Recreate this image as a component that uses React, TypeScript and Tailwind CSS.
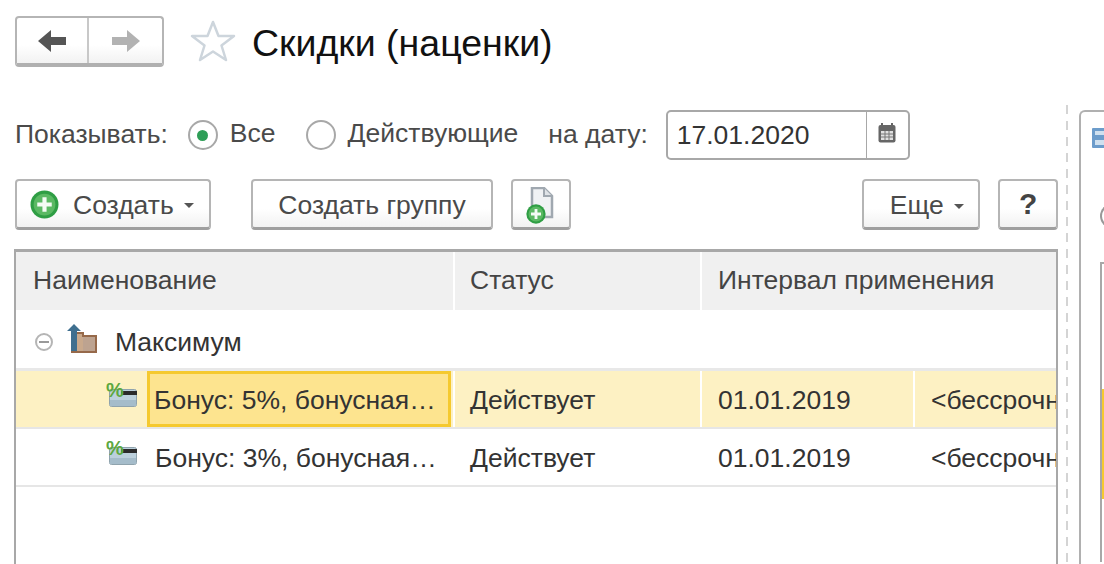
import React from "react";

const btn = "flex items-center justify-center rounded-[4px] border-2 border-[#b5b5b5] border-b-[3px] border-b-[#9f9f9f] bg-gradient-to-b from-white from-60% to-[#f2f2f2] text-[#4a4a4a]";

function Caret() {
  return <span className="ml-[10px] mt-[3px] h-0 w-0 border-x-[5px] border-t-[5px] border-x-transparent border-t-[#555555]" />;
}

function PlusBadge({ size }: { size: number }) {
  return (
    <svg width={size} height={size} viewBox="0 0 28 28">
      <circle cx="14" cy="14" r="13.5" fill="#2f9e44" />
      <circle cx="14" cy="14" r="10.5" fill="#5bb963" />
      <path d="M12 7h4v5h5v4h-5v5h-4v-5h-5v-4h5z" fill="#f4fbf4" />
    </svg>
  );
}

function Radio({ checked }: { checked?: boolean }) {
  return (
    <span className="flex h-[30px] w-[30px] items-center justify-center rounded-full border-2 border-[#a8a8a8] bg-white">
      {checked && <span className="h-[11px] w-[11px] rounded-full bg-[#2e9e57]" />}
    </span>
  );
}

function DiscountIcon() {
  return (
    <svg width="31" height="30" viewBox="0 -5 31 30" className="mt-[-15px]">
      <rect x="3.5" y="7.5" width="27" height="17" rx="2" fill="#bcd0dc" stroke="#8fa3ad" />
      <rect x="15" y="9" width="16" height="4" fill="#2b2b2b" />
      <rect x="4" y="18" width="26" height="6" fill="#a5bcca" />
      <text x="0" y="15" fontSize="20" fontWeight="700" fill="#5da83f" fontFamily="Liberation Sans, sans-serif">%</text>
    </svg>
  );
}

function Row({ selected, name }: { selected?: boolean; name: string }) {
  const cell = selected ? "bg-[#fdf1c3]" : "";
  const divider = selected ? "border-l-2 border-white" : "border-l-2 border-transparent";
  return (
    <div className="grid h-[58px] grid-cols-[437px_247px_213px_1fr] border-b-2 border-[#e6e6e6] text-[26.5px] leading-none text-[#333333]">
      <div className={`flex items-center ${cell}`}>
        <div className="flex w-[131px] shrink-0 justify-end pr-[10px]"><DiscountIcon /></div>
        <div className={`flex h-full min-w-0 flex-1 items-center ${selected ? "mr-[2px] border-[3px] border-[#f5c92f] bg-[#fde48f] pl-[4px]" : "pl-[8px]"}`}>
          <span className="block whitespace-nowrap pt-[2px]">{name}</span>
        </div>
      </div>
      <div className={`flex items-center pl-[15px] pt-[2px] ${cell} ${divider}`}>Действует</div>
      <div className={`flex items-center pl-[16px] pt-[2px] ${cell} ${divider}`}>01.01.2019</div>
      <div className={`flex items-center overflow-hidden whitespace-nowrap pl-[16px] pt-[2px] ${cell} ${divider}`}>&lt;бессрочно&gt;</div>
    </div>
  );
}

export default function App() {
  return (
    <div className="flex h-[564px] w-[1104px] overflow-hidden bg-white font-['Liberation_Sans',Arial,sans-serif]">
      <div className="flex w-[1058px] shrink-0 flex-col pl-[15px]">
        <div className="mt-[16px] flex h-[51px] items-center">
          <div className="flex h-[51px] w-[149px] rounded-[4px] border-2 border-[#b5b5b5] border-b-[4px] border-b-[#b0b0b0] bg-gradient-to-b from-white from-60% to-[#f2f2f2]">
            <div className="flex w-[72px] items-center justify-center border-r-2 border-[#c8c8c8]">
              <svg width="28" height="22" viewBox="0 0 28 22"><path d="M0 11 L13 0 V7 H28 V15 H13 V22 Z" fill="#555555" /></svg>
            </div>
            <div className="flex flex-1 items-center justify-center">
              <svg width="28" height="22" viewBox="0 0 28 22"><path d="M28 11 L15 0 V7 H0 V15 H15 V22 Z" fill="#b2b2b2" /></svg>
            </div>
          </div>
          <svg width="48" height="44" viewBox="0 0 48 44" className="ml-[25px] mt-[-2px]">
            <path d="M24 3 L29.5 17 L45 17 L32.5 26.5 L37 41 L24 32.5 L11 41 L15.5 26.5 L3 17 L18.5 17 Z" fill="white" stroke="#cdd5dc" strokeWidth="2.5" strokeLinejoin="round" />
          </svg>
          <div className="ml-[15px] pt-[5px] text-[37.5px] leading-none whitespace-nowrap text-[#111111]">Скидки (наценки)</div>
        </div>

        <div className="mt-[43px] flex h-[50px] items-center text-[26.5px] leading-none text-[#4a4a4a]">
          <span className="mb-[1px]">Показывать:</span>
          <span className="ml-[20px]"><Radio checked /></span>
          <span className="ml-[12px] mb-[3px]">Все</span>
          <span className="ml-[30px]"><Radio /></span>
          <span className="ml-[12px] mb-[3px]">Действующие</span>
          <span className="ml-[30px] mb-[1px]">на дату:</span>
          <div className="ml-[18px] flex h-[50px] w-[244px] rounded-[5px] border-2 border-[#a8a8a8] text-[#333333]">
            <div className="flex w-[199px] items-center border-r border-[#a8a8a8] pl-[9px]">17.01.2020</div>
            <div className="flex flex-1 items-center justify-center pb-[4px]">
              <svg width="18" height="20" viewBox="0 0 18 20">
                <rect x="0.5" y="2" width="17" height="17.5" rx="2" fill="#666666" />
                <rect x="3" y="0" width="2" height="4" fill="#666666" />
                <rect x="13" y="0" width="2" height="4" fill="#666666" />
                <rect x="3" y="8" width="12" height="9" fill="#e0e0e0" />
                <path d="M7 8v9M11 8v9M3 11h12M3 14h12" stroke="#777777" strokeWidth="1" />
              </svg>
            </div>
          </div>
        </div>

        <div className="mt-[19px] flex h-[51px] items-stretch text-[26.5px] leading-none">
          <div className={`${btn} w-[196px] justify-start pl-[13px]`}>
            <PlusBadge size={29} />
            <span className="ml-[14px] pt-[2px]">Создать</span>
            <Caret />
          </div>
          <div className={`${btn} ml-[40px] w-[243px] pt-[2px]`}>Создать группу</div>
          <div className={`${btn} ml-[18px] w-[60px]`}>
            <div className="relative h-[34px] w-[26px]">
              <svg width="26" height="32" viewBox="0 0 26 32" className="ml-[1px]">
                <path d="M3 1 H15 L23 9 V30 H3 Z" fill="#f0f2f4" stroke="#a0a8b0" strokeWidth="2.5" />
                <path d="M15 1 V9 H23" fill="#dfe3e7" stroke="#a0a8b0" strokeWidth="2" />
              </svg>
              <span className="absolute bottom-[-3px] left-[-2px]"><PlusBadge size={20} /></span>
            </div>
          </div>
          <div className={`${btn} ml-[291px] w-[118px] pl-[11px] pt-[2px]`}>Еще<Caret /></div>
          <div className={`${btn} ml-[18px] w-[60px] text-[30px] font-bold text-[#444444]`}>?</div>
        </div>

        <div className="ml-[-1px] mt-[19px] flex-1 border-x-2 border-t-[3px] border-[#a8a8a8]">
          <div className="grid h-[58px] grid-cols-[437px_247px_1fr] bg-[#f0f0f0] pb-[1px] text-[26.5px] leading-none text-[#444444]">
            <div className="flex items-center pl-[17px]">Наименование</div>
            <div className="mb-[-1px] flex items-center border-l-2 border-white pb-[1px] pl-[15px]">Статус</div>
            <div className="mb-[-1px] flex items-center border-l-2 border-white pb-[1px] pl-[16px]">Интервал применения</div>
          </div>
          <div className="flex h-[61px] items-center border-b-[3px] border-[#e8e8e8] pt-[6px] text-[26.5px] leading-none text-[#333333]">
            <span className="ml-[19px] flex h-[18px] w-[18px] items-center justify-center rounded-full border-2 border-[#b5b5b5]">
              <span className="h-[2px] w-[10px] bg-[#999999]" />
            </span>
            <svg width="32" height="30" viewBox="0 0 32 30" className="ml-[13px] mb-[6px]">
              <path d="M6 9 H17 V12 H30 V28 H6 Z" fill="#c9a98c" stroke="#96694a" strokeWidth="2" />
              <rect x="17" y="13" width="12" height="14" fill="#bda390" />
              <path d="M8 0 L15 7 H11 V27 H5 V7 H1 Z" fill="#3f6f8f" />
            </svg>
            <span className="ml-[17px]">Максимум</span>
          </div>
          <Row selected name="Бонус: 5%, бонусная…" />
          <Row name="Бонус: 3%, бонусная…" />
        </div>
      </div>

      <div className="ml-[8px] mt-[105px] w-[2px] shrink-0 bg-[repeating-linear-gradient(to_bottom,#d4d4d4_0px,#d4d4d4_9px,transparent_9px,transparent_16px)]" />

      <div className="ml-[11px] mt-[110px] flex-1 rounded-tl-[6px] border-l-2 border-t-2 border-[#b0b0b0] pl-[11px] pt-[16px]">
        <svg width="14" height="20" viewBox="0 0 14 20" className="block">
          <rect width="20" height="20" rx="1" fill="#6c9ccb" />
          <rect x="3" y="3" width="11" height="4" fill="#cfe0ef" />
          <rect x="3" y="12" width="11" height="5" fill="#cfe0ef" />
        </svg>
        <div className="ml-[8px] mt-[56px] h-[24px] w-[12px] rounded-l-full border-2 border-r-0 border-[#999999]" />
        <div className="mt-[34px] ml-[8px] h-[300px] border-l-2 border-t-2 border-[#a8a8a8] pt-[125px]">
          <div className="h-[110px] border-l-2 border-[#f5c92f] bg-[#fdf1c3]" />
        </div>
      </div>
    </div>
  );
}
